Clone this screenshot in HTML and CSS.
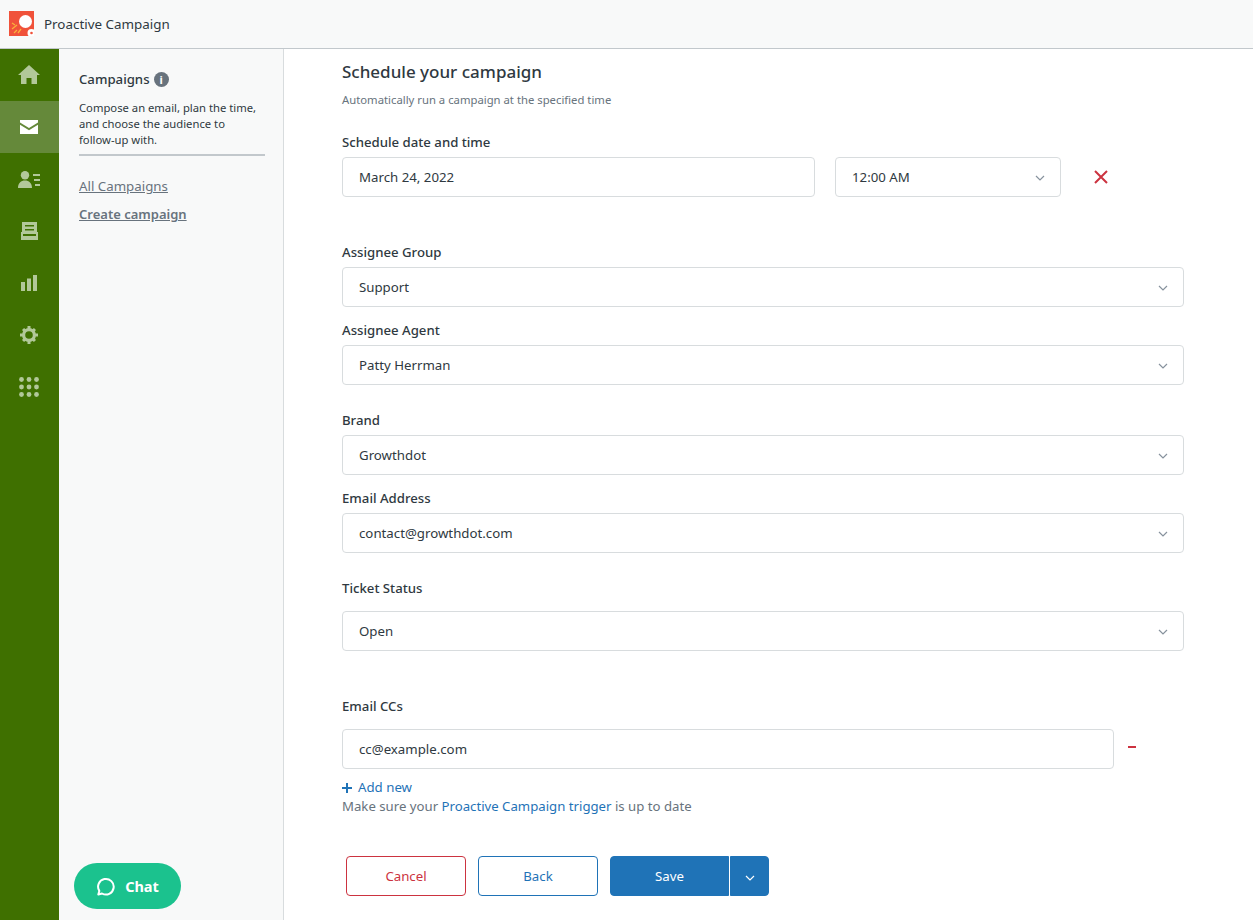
FILE: index.html
```html
<!DOCTYPE html>
<html>
<head>
    <title>Proactive Campaign</title>
    <link rel="stylesheet" href="styles.css">
</head>
<body>
    <header class="topbar">
        <svg class="app-logo" viewBox="0 0 25 25">
            <rect width="25" height="25" fill="#f0523a"/>
            <circle cx="16.500" cy="10.500" r="6.500" fill="#fff"/>
            <path d="M3 18l5-4M3 12l3 2M9 22l3-4M5 22l3-3" stroke="#fbb03b" stroke-width="1.300" fill="none"/>
            <circle cx="22.500" cy="22" r="4" fill="#fff"/>
            <circle cx="22.500" cy="22" r="1.300" fill="#f0523a"/>
        </svg>
        <span class="app-name">Proactive Campaign</span>
    </header>

    <div class="layout">
        <nav class="rail">
            <a class="rail-item">
                <svg viewBox="0 0 22 20" width="22" height="20"><path d="M11 0L0 10h3v9h5.500v-6h5v6H19v-9h3z"/></svg>
            </a>
            <a class="rail-item active">
                <svg viewBox="0 0 18 14" width="18" height="14"><path d="M0 0h18v2.500L9 8 0 2.500zM0 4.800l9 5.400 9-5.400V14H0z"/></svg>
            </a>
            <a class="rail-item">
                <svg viewBox="0 0 22 17" width="22" height="17"><circle cx="7" cy="4.200" r="4.200"/><path d="M0 17c0-5 3-7.500 7-7.500s7 2.500 7 7.500zM15 3h7v2h-7zM16 8h6v2h-6zM17 13h5v2h-5z"/></svg>
            </a>
            <a class="rail-item">
                <svg viewBox="0 0 17 18" width="17" height="18"><path d="M1 0h15v12H1zM4 3v1.500h9V3zM4 7v1.500h9V7z" fill-rule="evenodd"/><path d="M0 10h2v4h13v-4h2v8H0z"/></svg>
            </a>
            <a class="rail-item">
                <svg viewBox="0 0 16 16" width="16" height="16"><path d="M0 7h4v9H0zM6 3.500h4V16H6zM12 0h4v16h-4z"/></svg>
            </a>
            <a class="rail-item">
                <svg viewBox="0 0 18 18" width="18" height="18"><circle cx="9" cy="9" r="5.400" fill="none" stroke="currentColor" stroke-width="3.200"/><path d="M7.500 0h3v3h-3zM7.500 15h3v3h-3zM0 7.500h3v3H0zM15 7.500h3v3h-3zM2 4.100L4.100 2l2.100 2.100-2.100 2.100zM11.800 13.900l2.100-2.100 2.100 2.100-2.100 2.100zM13.900 2L16 4.100l-2.100 2.100-2.100-2.100zM4.100 11.800l2.100 2.100L4.100 16 2 13.900z"/></svg>
            </a>
            <a class="rail-item">
                <svg viewBox="0 0 20 20" width="20" height="20"><circle cx="2.500" cy="2.500" r="2.400"/><circle cx="10" cy="2.500" r="2.400"/><circle cx="17.500" cy="2.500" r="2.400"/><circle cx="2.500" cy="10" r="2.400"/><circle cx="10" cy="10" r="2.400"/><circle cx="17.500" cy="10" r="2.400"/><circle cx="2.500" cy="17.500" r="2.400"/><circle cx="10" cy="17.500" r="2.400"/><circle cx="17.500" cy="17.500" r="2.400"/></svg>
            </a>
        </nav>

        <aside class="side-panel">
            <h2 class="side-title">Campaigns <span class="info-dot">i</span></h2>
            <p class="side-text">Compose an email, plan the time,<br>and choose the audience to<br>follow-up with.</p>
            <a class="side-link">All Campaigns</a>
            <a class="side-link current">Create campaign</a>
            <button class="chat-btn">
                <svg viewBox="0 0 20 20" width="20" height="20"><path d="M3.300 18.500l1-3.600A7.800 7.800 0 1 1 7 17.500z" fill="none" stroke="#fff" stroke-width="2" stroke-linejoin="round"/></svg>
                Chat
            </button>
        </aside>

        <main class="content">
            <h1 class="page-title">Schedule your campaign</h1>
            <p class="page-sub">Automatically run a campaign at the specified time</p>

            <label class="field-label first">Schedule date and time</label>
            <div class="date-row">
                <div class="input date-input">March 24, 2022</div>
                <div class="input select time-input">12:00 AM <svg class="chev" viewBox="0 0 10 6"><path d="M1 1l4 4 4-4"/></svg></div>
                <svg class="remove-x" viewBox="0 0 14 14"><path d="M1 1l12 12M13 1L1 13"/></svg>
            </div>

            <label class="field-label far">Assignee Group</label>
            <div class="input select">Support <svg class="chev" viewBox="0 0 10 6"><path d="M1 1l4 4 4-4"/></svg></div>

            <label class="field-label near">Assignee Agent</label>
            <div class="input select">Patty Herrman <svg class="chev" viewBox="0 0 10 6"><path d="M1 1l4 4 4-4"/></svg></div>

            <label class="field-label mid">Brand</label>
            <div class="input select">Growthdot <svg class="chev" viewBox="0 0 10 6"><path d="M1 1l4 4 4-4"/></svg></div>

            <label class="field-label near">Email Address</label>
            <div class="input select">contact@growthdot.com <svg class="chev" viewBox="0 0 10 6"><path d="M1 1l4 4 4-4"/></svg></div>

            <label class="field-label mid wide-gap">Ticket Status</label>
            <div class="input select">Open <svg class="chev" viewBox="0 0 10 6"><path d="M1 1l4 4 4-4"/></svg></div>

            <label class="field-label far wide-gap">Email CCs</label>
            <div class="cc-row">
                <div class="input cc-input">cc@example.com</div>
                <span class="cc-minus"></span>
            </div>

            <a class="add-new"><svg viewBox="0 0 10 10" width="10" height="10"><path d="M5 0v10M0 5h10"/></svg>Add new</a>
            <p class="trigger-note">Make sure your <a>Proactive Campaign trigger</a> is up to date</p>

            <div class="actions">
                <button class="btn btn-cancel">Cancel</button>
                <button class="btn btn-back">Back</button>
                <div class="save-group">
                    <button class="btn btn-save">Save</button>
                    <button class="btn btn-caret"><svg class="chev" viewBox="0 0 10 6"><path d="M1 1l4 4 4-4"/></svg></button>
                </div>
            </div>
        </main>
    </div>
</body>
</html>
```

FILE: styles.css
```css
* {
    margin: 0;
    padding: 0;
    box-sizing: border-box;
    font-family: 'Noto Sans', 'Open Sans', Arial, sans-serif;
}

body {
    height: 920px;
    overflow: hidden;
    background: #fff;
    color: #2f3941;
}

.topbar {
    height: 49px;
    display: flex;
    align-items: center;
    padding-left: 9px;
    background: #f8f9f9;
    border-bottom: 1px solid #c2c8cc;
}

.app-logo {
    width: 25px;
    height: 25px;
    margin-top: -1px;
}

.app-name {
    margin-left: 10px;
    font-size: 13.4px;
    color: #2f3941;
}

.layout {
    display: flex;
    height: 871px;
}

.rail {
    width: 59px;
    flex-shrink: 0;
    padding-right: 1px;
    background: #3f7000;
}

.rail-item {
    height: 52px;
    display: flex;
    align-items: center;
    justify-content: center;
    color: #b2c899;
}

.rail-item svg {
    fill: #b2c899;
}

.rail-item.active {
    margin-right: -1px;
    padding-right: 1px;
    background: #65893a;
}

.rail-item.active svg {
    fill: #fff;
}

.side-panel {
    position: relative;
    width: 225px;
    flex-shrink: 0;
    padding: 20px 18px 0 20px;
    background: #f8f9f9;
    border-right: 1px solid #d8dcde;
}

.side-title {
    display: flex;
    align-items: center;
    gap: 4px;
    font-size: 13.2px;
    font-weight: 500;
    line-height: 20px;
}

.info-dot {
    width: 15px;
    height: 15px;
    border-radius: 50%;
    background: #68737d;
    color: #fff;
    font-size: 11px;
    font-weight: 700;
    line-height: 15px;
    text-align: center;
}

.side-text {
    margin-top: 11px;
    padding-bottom: 6px;
    font-size: 11.25px;
    line-height: 16px;
    border-bottom: 2px solid #c2c8cc;
}

.side-link {
    display: block;
    width: fit-content;
    margin-top: 8px;
    font-size: 13.3px;
    line-height: 20px;
    color: #68737d;
    text-decoration: underline;
}

.side-link:first-of-type {
    margin-top: 20px;
}

.side-link.current {
    font-size: 13px;
    font-weight: 600;
}

.chat-btn {
    position: absolute;
    left: 15px;
    bottom: 11px;
    width: 107px;
    height: 46px;
    display: flex;
    align-items: center;
    justify-content: center;
    gap: 10px;
    padding-right: 1px;
    border: none;
    border-radius: 23px;
    background: #1bc28e;
    color: #fff;
    font-size: 14.5px;
    font-weight: 700;
}

.content {
    flex: 1;
    padding: 11px 69px 0 58px;
}

.page-title {
    font-size: 17px;
    font-weight: 500;
    line-height: 24px;
}

.page-sub {
    margin-top: 7px;
    font-size: 11.3px;
    line-height: 17px;
    color: #68737d;
}

.field-label {
    display: block;
    margin-bottom: 5px;
    font-size: 13.2px;
    font-weight: 500;
    line-height: 20px;
}

.field-label.first { margin-top: 24px; }
.field-label.far { margin-top: 45px; }
.field-label.mid { margin-top: 25px; }
.field-label.near { margin-top: 13px; }
.field-label.wide-gap { margin-bottom: 13px; }

.input {
    position: relative;
    height: 40px;
    display: flex;
    align-items: center;
    padding-left: 16px;
    background: #fff;
    border: 1px solid #d8dcde;
    border-radius: 4px;
    font-size: 13.25px;
}

.chev {
    width: 10px;
    height: 6px;
    fill: none;
    stroke: #87929d;
    stroke-width: 1.2;
}

.select .chev {
    position: absolute;
    right: 15px;
    top: 17px;
}

.date-row {
    display: flex;
    align-items: center;
}

.date-input {
    width: 473px;
}

.time-input {
    width: 226px;
    margin-left: 20px;
}

.remove-x {
    width: 14px;
    height: 14px;
    margin-left: 33px;
    fill: none;
    stroke: #cc3340;
    stroke-width: 2;
}

.cc-row {
    display: flex;
    align-items: center;
}

.cc-input {
    width: 772px;
}

.cc-minus {
    width: 8px;
    height: 2px;
    margin-left: 14px;
    margin-top: -4px;
    background: #cc3340;
}

.add-new {
    display: flex;
    align-items: center;
    gap: 6px;
    margin-top: 9px;
    font-size: 13.25px;
    line-height: 19px;
    color: #1f73b7;
}

.add-new svg {
    fill: none;
    stroke: #1f73b7;
    stroke-width: 2;
}

.trigger-note {
    font-size: 13.2px;
    line-height: 19px;
    color: #68737d;
}

.trigger-note a {
    color: #1f73b7;
}

.actions {
    display: flex;
    gap: 12px;
    margin-top: 40px;
    margin-left: 4px;
}

.btn {
    width: 120px;
    height: 40px;
    background: #fff;
    border: 1px solid;
    border-radius: 4px;
    font-size: 13.25px;
}

.btn-cancel {
    color: #cc3340;
    border-color: #cc3340;
}

.btn-back {
    color: #1f73b7;
    border-color: #1f73b7;
}

.save-group {
    display: flex;
    gap: 1px;
}

.btn-save {
    width: 119px;
    background: #1f73b7;
    border-color: #1f73b7;
    color: #fff;
    border-radius: 4px 0 0 4px;
}

.btn-caret {
    width: 39px;
    background: #1f73b7;
    border-color: #1f73b7;
    border-radius: 0 4px 4px 0;
}

.btn-caret .chev {
    stroke: #fff;
}
```
